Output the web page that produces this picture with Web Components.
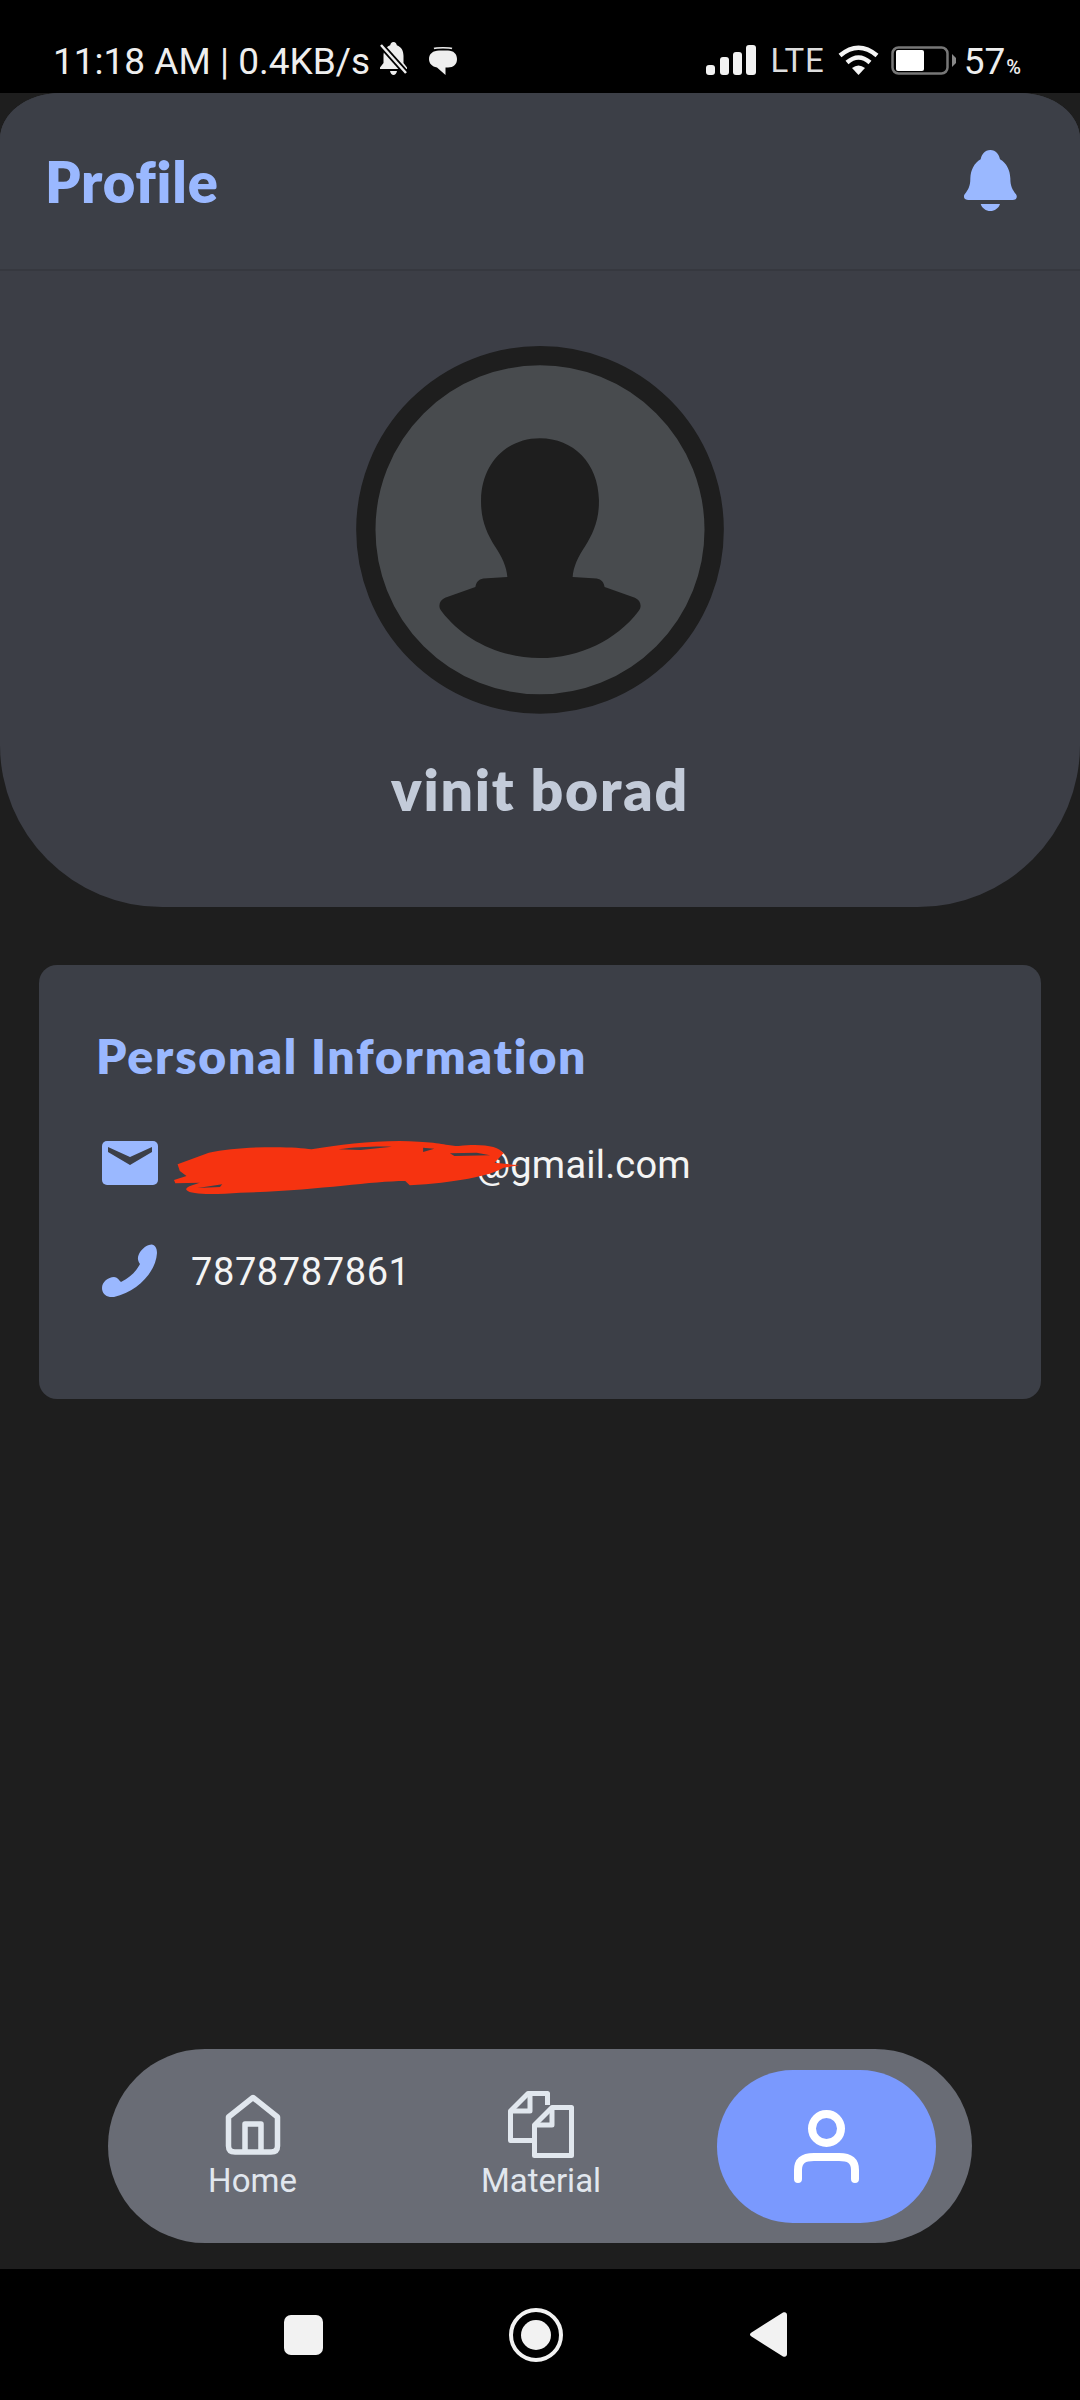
<!DOCTYPE html>
<html lang="en"><head><meta charset="utf-8"><title>Profile</title>
<style>
html,body{margin:0;padding:0;background:#1e1e1e}
body{width:1080px;height:2400px;overflow:hidden;font-family:Roboto,"Liberation Sans",sans-serif}
</style></head>
<body>
<app-shell>
  <status-bar slot="status"></status-bar>
  <profile-hero slot="hero" name="vinit borad" title="Profile"></profile-hero>
  <info-card slot="card" heading="Personal Information">
    <info-row icon="mail" redacted><span>@gmail.com</span></info-row>
    <info-row icon="phone"><span>7878787861</span></info-row>
  </info-card>
  <bottom-nav slot="nav">
    <nav-item icon="home" label="Home"></nav-item>
    <nav-item icon="material" label="Material"></nav-item>
    <nav-item icon="person" active></nav-item>
  </bottom-nav>
  <system-nav slot="system"></system-nav>
</app-shell>
<script>
const def=(name,render)=>customElements.define(name,class extends HTMLElement{
  connectedCallback(){ if(!this.shadowRoot){this.attachShadow({mode:'open'}).innerHTML=render(this);} }
});
def('app-shell',()=>`<style>:host{display:flex;flex-direction:column;width:1080px;height:2400px}
.grow{flex:1}</style>
<slot name="status"></slot><slot name="hero"></slot><slot name="card"></slot><div class="grow"></div><slot name="nav"></slot><slot name="system"></slot>`);

def('status-bar',()=>`<style>
:host{display:flex;align-items:flex-start;height:93px;box-sizing:border-box;background:#000;color:#eee;padding:0 59px 0 53px;font:400 37px/40px Roboto,sans-serif}
.t{margin-top:42px;white-space:nowrap}
svg{display:block;flex:none}
.g{flex:1}
.lte{font-size:33px;line-height:36px;margin:43px 0 0 14px;color:#ddd;letter-spacing:.8px}
.pc{font-size:20px;line-height:24px;margin:55px 0 0 1px;font-weight:500}
</style>
<span class="t">11:18 AM | 0.4KB/s</span>
<svg style="margin:42px 0 0 8px" width="31" height="33" viewBox="0 0 31 33"><path d="M15.500 0C17.500 0 18.500 1.500 18.800 3.200C23.500 4.800 25.500 9 25.500 14V21L29 25.500V27H2V25.500L5.500 21V14C5.500 9 7.500 4.800 12.200 3.200C12.500 1.500 13.500 0 15.500 0ZM12 29H19C18.500 31.500 17 33 15.500 33C14 33 12.500 31.500 12 29Z" fill="#eee"/><path d="M3 3L28 31" stroke="#000" stroke-width="6"/><path d="M3 3L28 31" stroke="#eee" stroke-width="2.500"/></svg>
<svg style="margin:47px 0 0 20px" width="28" height="28" viewBox="0 0 28 28"><path d="M5 1.500C7 .5 21 .5 23 1.500" stroke="#eee" stroke-width="1.500" fill="none"/><path d="M10 3.500H19C24.500 3.500 28 7 28 12C28 17.500 24.500 20.500 19 20.500H16.500V28L8 20.500C3 19.500 0 16.500 0 12C0 7 4 3.500 10 3.500Z" fill="#eee"/></svg>
<span class="g"></span>
<svg style="margin-top:45px" width="50" height="30" viewBox="0 0 50 30" fill="#f2f2f2"><rect x="0" y="20" width="9" height="10" rx="3"/><rect x="14" y="12" width="9" height="18" rx="3"/><rect x="27" y="7" width="9" height="23" rx="3"/><rect x="40" y="0" width="10" height="30" rx="3"/></svg>
<span class="lte">LTE</span>
<svg style="margin:45px 0 0 13px" width="41" height="30" viewBox="0 0 41 30"><g fill="none" stroke="#f5f5f5" stroke-width="4.500"><path d="M2 10.500Q20.500 -5 39 10.500"/><path d="M9 17.500Q20.500 7.500 32 17.500"/></g><path d="M14 23Q20.500 18 27 23L20.500 30Z" fill="#f5f5f5"/></svg>
<svg style="margin:45px 0 0 12px" width="66" height="30" viewBox="0 0 66 30"><rect x="1.500" y="2.500" width="55" height="26" rx="6" fill="none" stroke="#777" stroke-width="2.500"/><rect x="5" y="5" width="28" height="21" rx="2" fill="#fff"/><path d="M61 9L65 13V18L61 22Z" fill="#888"/></svg>
<span class="t" style="margin-left:7px">57</span><span class="pc">%</span>`);

def('profile-hero',h=>`<style>
:host{display:block;background:#3c3e46;border-radius:60px 60px 162px 162px/46px 46px 162px 162px;height:814px;box-sizing:border-box;overflow:hidden}
header{display:flex;justify-content:space-between;align-items:flex-start;box-sizing:border-box;height:178px;background:#3c3f47;border-bottom:2px solid #36383f;padding:0 63px 0 45px}
h1{margin:55px 0 0;font:800 56px/68px Lato,"Open Sans",sans-serif;color:#9ab8ff;letter-spacing:.8px}
header svg{display:block;margin-top:57px}
.c{display:flex;flex-direction:column;align-items:center;padding-top:75px}
.av{display:block}
h2{margin:41px 0 0;font:800 57px/68px Lato,"Open Sans",sans-serif;color:#c3cbd9;letter-spacing:1.800px}
</style>
<header><h1>${h.getAttribute('title')}</h1>
<svg width="53" height="61" viewBox="973 450 157 183"><path fill="#9ab8ff" d="M1051 450C1068 450 1078 465 1080 478C1100 490 1110 510 1111 535C1111 560 1118 570 1128 583C1134 592 1128 600 1118 600L985 600C975 600 968 592 974 583C984 570 991 560 991 535C992 510 1002 490 1022 478C1024 465 1034 450 1051 450ZM1022 612L1080 612C1076 625 1064 633 1051 633C1038 633 1026 625 1022 612Z"/></svg></header>
<div class="c">
<svg class="av" width="368" height="368" viewBox="78 48 1104 1105"><circle cx="630" cy="600" r="523" fill="#484b4e" stroke="#1e1e1e" stroke-width="58"/><path fill="#1e1e1e" d="M630 325C530 325 455 400 453 510C452 570 470 610 495 650C515 680 530 710 532 742L460 746C445 748 437 760 436 772L345 804C328 812 322 830 335 845C400 930 510 985 630 985C750 985 860 930 925 845C938 830 932 812 915 804L824 772C823 760 815 748 800 746L728 742C730 710 745 680 765 650C790 610 808 570 807 510C805 400 730 325 630 325Z"/></svg>
<h2>${h.getAttribute('name')}</h2></div>`);

def('info-card',h=>`<style>
:host{display:block;margin:58px 39px 0;height:434px;box-sizing:border-box;padding:61px 57px 0;background:#3c3f47;border-radius:18px}
h3{margin:0 0 46px;font:800 48px/60px Lato,"Open Sans",sans-serif;color:#9ab8ff;letter-spacing:1.800px}
.rows{display:flex;flex-direction:column;gap:45px;margin-left:6px}
</style><h3>${h.getAttribute('heading')}</h3><div class="rows"><slot></slot></div>`);

const ICONS={
mail:`<svg width="56" height="44" viewBox="0 0 56 44"><rect width="56" height="44" rx="5" fill="#9ab8ff"/><path d="M6 6L28 16L50 6V11L28 24L6 11Z" fill="#3c3f47"/></svg>`,
phone:`<svg width="55" height="53" viewBox="0 0 55 53"><path fill="#9ab8ff" d="M47 1C52 -1 55 3 55 9C54 28 35 48 12 53C5 54 0 50 0 44C0 38 6 33 12 33C15 33 17 36 19 38C30 33 36 24 38 20C36 17 35 14 37 10C39 6 43 2 47 1Z"/></svg>`,
home:`<svg width="56" height="61" viewBox="0 0 56 61" fill="none" stroke="#e1e7ee" stroke-width="5.500" stroke-linejoin="round"><path d="M28 3.500L52.500 23V52Q52.500 58 46 58H10Q3.500 58 3.500 52V23Z"/><path d="M20 58V30H36V58"/></svg>`,
material:`<svg width="66" height="67" viewBox="0 0 66 67" fill="none" stroke="#e1e7ee" stroke-width="5" stroke-linejoin="round"><path d="M39.500 14V2.500H20L2.500 20V49.500H24"/><path d="M22 3V20H3" /><path d="M44 16.500H63.500V64.500H26.500V34Z"/><path d="M44 17V34H27"/></svg>`,
person:`<svg width="65" height="73" viewBox="0 0 65 73" fill="none" stroke="#fff" stroke-width="8" stroke-linecap="round"><circle cx="32.500" cy="18.500" r="14.500"/><path d="M4 69V60C4 50 10 47 20 47H45C55 47 61 50 61 60V69"/></svg>`};

def('info-row',h=>`<style>
:host{display:flex;align-items:center;height:62px;color:#f4f4f4;font:400 38px/62px Roboto,sans-serif;letter-spacing:${h.hasAttribute('redacted')?'.2px':'.6px'};position:relative}
.ic{width:89px;flex:none;display:flex;align-items:center}
svg{display:block}
.txt{display:flex;padding-top:3px;white-space:nowrap}
.hide{width:285px;flex:none}
.scrib{position:absolute;left:72px;top:8px;z-index:1}
</style>
<div class="ic">${ICONS[h.getAttribute('icon')]}</div>
<div class="txt">${h.hasAttribute('redacted')?'<span class="hide"></span>':''}<slot></slot></div>
${h.hasAttribute('redacted')?`<svg class="scrib" width="346" height="55" viewBox="322 572 775 165" preserveAspectRatio="none"><path fill="#f63310" d="M330 645L400 610C470 590 590 590 630 600C700 585 790 570 870 577C920 580 940 590 960 590C1010 582 1050 590 1060 612L1040 640L1095 648L1060 655C1030 680 950 700 850 708L840 695C760 695 640 725 470 730C420 735 360 738 350 722C345 712 370 705 380 700L325 702L322 692L350 680L335 665Z"/><path fill="#3c3f47" d="M880 595L905 598L880 608ZM690 600C730 592 780 590 810 592L740 602ZM375 716L430 705L425 713ZM940 612L1000 610L1030 618L950 620Z"/></svg>`:''}`);

def('bottom-nav',()=>`<style>
:host{display:grid;grid-template-columns:289px 288px 1fr;align-items:center;margin:0 108px 26px 108px;height:194px;box-sizing:border-box;background:#696c75;border-radius:97px;padding:0 4px 0 0}
</style><slot></slot>`);

def('nav-item',h=>{const a=h.hasAttribute('active'),l=h.getAttribute('label');return `<style>
:host{display:flex;justify-content:center}
.b{display:flex;flex-direction:column;align-items:center;justify-content:center;gap:3px;color:#e1e7ee;font:400 33px/40px Roboto,sans-serif}
.i{height:67px;display:flex;align-items:center}
.on{width:219px;height:153px;border-radius:76px;background:#7a99fe}
.on .i{height:auto}
svg{display:block}
</style><div class="b ${a?'on':''}"><div class="i">${ICONS[h.getAttribute('icon')]}</div>${l?`<span>${l}</span>`:''}</div>`});

def('system-nav',()=>`<style>
:host{display:flex;align-items:center;height:131px;background:#000;padding-left:284px;box-sizing:border-box}
svg{display:block;flex:none}
</style>
<svg width="39" height="40" viewBox="0 0 39 40"><rect width="39" height="40" rx="7" fill="#f2f2f2"/></svg>
<svg style="margin-left:186px" width="54" height="54" viewBox="0 0 54 54"><circle cx="27" cy="27" r="25" fill="none" stroke="#f2f2f2" stroke-width="4"/><circle cx="27" cy="27" r="15" fill="#f2f2f2"/></svg>
<svg style="margin-left:187px" width="37" height="45" viewBox="0 0 37 45"><path d="M33 .5C35.500 -.5 37 1 37 3V42C37 44 35.500 45.500 33 44.500L1.500 24.500C-.5 23.500 -.5 21.500 1.500 20.500Z" fill="#f2f2f2"/></svg>`);
</script>
</body></html>
